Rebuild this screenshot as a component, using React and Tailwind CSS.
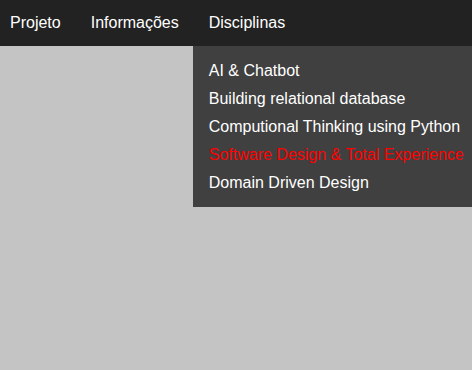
import React from "react";

const disciplinas = [
  { name: "AI & Chatbot" },
  { name: "Building relational database" },
  { name: "Computional Thinking using Python" },
  { name: "Software Design & Total Experience", active: true },
  { name: "Domain Driven Design" },
];

const App = () => {
  return (
    <div
      className="w-[472px] h-[370px] overflow-hidden bg-[#c4c4c4]"
      style={{ fontFamily: '"Liberation Sans", Arial, sans-serif' }}
    >
      <nav className="h-[46px] bg-[#222222]">
        <ul className="flex h-full items-center pl-[10px] gap-[30px] text-[16px] text-white">
          <li>Projeto</li>
          <li>Informações</li>
          <li className="relative h-full flex items-center">
            Disciplinas
            <ul className="absolute left-[-16px] top-[46px] w-[280px] bg-[#404040] pl-[16px] pt-[11px] pb-[10px]">
              {disciplinas.map((d) => (
                <li
                  key={d.name}
                  className={`h-[28px] leading-[28px] whitespace-nowrap ${d.active ? "text-[#ff0000]" : "text-white"}`}
                >
                  {d.name}
                </li>
              ))}
            </ul>
          </li>
        </ul>
      </nav>
    </div>
  );
};

export default App;
